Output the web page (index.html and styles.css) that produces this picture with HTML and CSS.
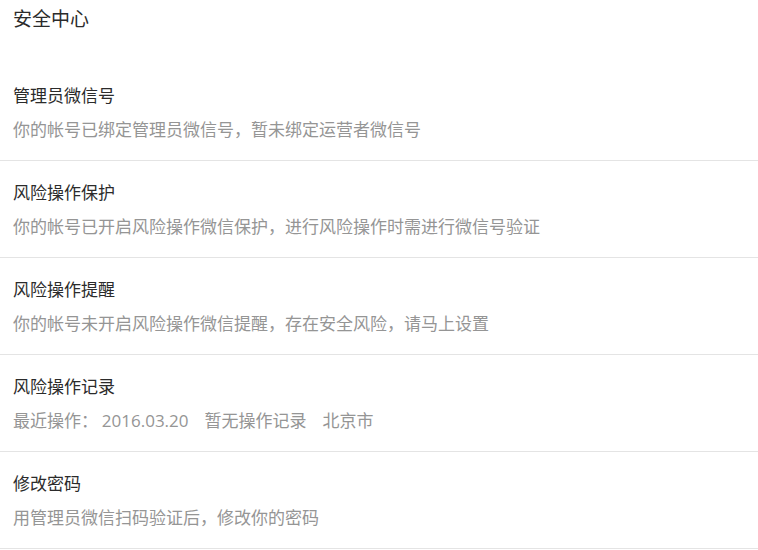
FILE: index.html
```html
<!DOCTYPE html>
<html lang="zh-CN">
<head>
<meta charset="utf-8">
<link rel="stylesheet" href="styles.css">
</head>
<body>
<div class="page">
  <div class="header">安全中心</div>
  <ul class="list">
    <li class="item">
      <div class="title">管理员微信号</div>
      <div class="desc">你的帐号已绑定管理员微信号，暂未绑定运营者微信号</div>
    </li>
    <li class="item">
      <div class="title">风险操作保护</div>
      <div class="desc">你的帐号已开启风险操作微信保护，进行风险操作时需进行微信号验证</div>
    </li>
    <li class="item">
      <div class="title">风险操作提醒</div>
      <div class="desc">你的帐号未开启风险操作微信提醒，存在安全风险，请马上设置</div>
    </li>
    <li class="item">
      <div class="title">风险操作记录</div>
      <div class="desc">最近操作： <span class="date">2016.03.20</span><span class="gap">暂无操作记录</span><span class="gap">北京市</span></div>
    </li>
    <li class="item">
      <div class="title">修改密码</div>
      <div class="desc">用管理员微信扫码验证后，修改你的密码</div>
    </li>
  </ul>
</div>
</body>
</html>
```

FILE: styles.css
```css
html, body {
  margin: 0;
  padding: 0;
  background: #ffffff;
}
body {
  font-family: "Microsoft YaHei", "Noto Sans CJK SC", "Noto Sans", sans-serif;
}
.page {
  width: 758px;
}
.header {
  height: 64px;
  box-sizing: border-box;
  padding: 5px 13px 0;
  font-size: 19px;
  line-height: 26px;
  color: #2b2b2b;
}
.list {
  list-style: none;
  margin: 0;
  padding: 0;
}
.item {
  padding: 19px 13px 19px;
  border-bottom: 1px solid #e4e4e4;
}
.title {
  font-size: 17px;
  line-height: 24px;
  color: #2b2b2b;
}
.desc {
  margin-top: 10px;
  font-size: 17px;
  line-height: 24px;
  color: #959595;
}
.date {
  font-family: "Open Sans", "Noto Sans", sans-serif;
  font-size: 17px;
  line-height: 1;
}
.gap {
  margin-left: 16px;
}
```
